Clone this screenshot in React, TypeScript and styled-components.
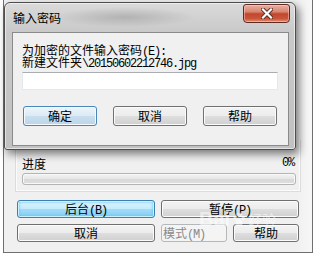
import styled, { createGlobalStyle, css } from "styled-components";

type Variant = "normal" | "focused" | "primary" | "disabled";

const GlobalStyle = createGlobalStyle`
  html, body {
    margin: 0;
    padding: 0;
    background: #ffffff;
  }
  body {
    font-family: "Noto Sans CJK SC", "Liberation Sans", sans-serif;
    font-size: 12px;
    color: #000;
  }
`;

const Latin = styled.span`
  font-family: "Liberation Mono", "DejaVu Sans Mono", monospace;
  letter-spacing: -1.2px;
`;

const Chunk = styled.span`
  display: inline-block;
  height: 12px;
  line-height: 12px;
  vertical-align: top;
`;

const buttonVariants = {
  normal: css`
    border-color: #707070;
    background: linear-gradient(#f3f3f3 0%, #ececec 50%, #dedede 50%, #d0d0d0 100%);
    box-shadow: inset 0 0 0 1px #fbfbfb;
    color: #000;
  `,
  focused: css`
    border-color: #3c7fb1;
    background: linear-gradient(#e2f5fd 0%, #c4ebfc 48%, #a2dbf7 52%, #86cff2 100%);
    box-shadow: inset 0 0 0 1px #c8f0ff, inset 0 0 3px 1px #55c2f2;
    color: #000;
  `,
  primary: css`
    border-color: #4a87b8;
    background: linear-gradient(#ecf5fb 0%, #dceaf5 50%, #c9dfee 50%, #bcd5e8 100%);
    box-shadow: inset 0 0 0 1px #f4faff;
    color: #000;
  `,
  disabled: css`
    border-color: #b4b8bb;
    background: #f4f4f4;
    box-shadow: none;
    color: #8a8a8a;
  `,
};

const WinButton = styled.div<{ $variant: Variant; $h: number; $align?: "left" | "center" }>`
  box-sizing: border-box;
  height: ${(p) => p.$h}px;
  line-height: ${(p) => p.$h - 2}px;
  border: 1px solid;
  border-radius: 3px;
  text-align: ${(p) => p.$align ?? "center"};
  padding-left: ${(p) => (p.$align === "left" ? "1px" : "0")};
  white-space: nowrap;
  overflow: hidden;
  ${(p) => buttonVariants[p.$variant]}
`;

const Screen = styled.div`
  position: relative;
  width: 316px;
  height: 255px;
  overflow: hidden;
  background: #ffffff;
`;

/* ---------- background progress window ---------- */

const BackWindow = styled.div`
  box-sizing: border-box;
  margin-left: 3px;
  width: 310px;
  height: 253px;
  border: 1px solid #6f6f6f;
  border-top: none;
  background: linear-gradient(90deg, #f0f0f0 0%, #f0f0f0 95%, #f7f7f7 100%);
  display: flex;
  flex-direction: column;
  padding-top: 140px;
`;

const ProgressPanel = styled.div`
  box-sizing: border-box;
  margin-left: 11px;
  width: 286px;
  border: 1px solid #dcdcdc;
  border-top: none;
  box-shadow: inset 1px 0 0 #fbfbfb, inset -1px -1px 0 #fbfbfb;
  padding: 17px 6px 6px 6px;
`;

const LabelRow = styled.div`
  display: flex;
  justify-content: space-between;
  line-height: 13px;
  height: 13px;
`;

const ProgressBar = styled.div`
  box-sizing: border-box;
  margin-top: 3px;
  width: 274px;
  height: 12px;
  border: 1px solid #b4b4b4;
  border-radius: 3px;
  background: linear-gradient(#f4f4f4 0%, #e6e6e6 50%, #d9d9d9 51%, #dedede 100%);
  box-shadow: inset 0 0 0 1px #f8f8f8;
`;

const ActionGrid = styled.div`
  margin-top: 8px;
  margin-left: 13px;
  display: grid;
  grid-template-columns: 138px 66px 66px;
  grid-auto-rows: 18px;
  column-gap: 6px;
  row-gap: 6px;
`;

const Span2 = styled.div`
  grid-column: span 2;
`;

/* ---------- front password dialog ---------- */

const Dialog = styled.div`
  position: absolute;
  left: 4px;
  top: 2px;
  box-sizing: border-box;
  width: 292px;
  height: 148px;
  border: 1px solid #4d4d4d;
  border-radius: 6px 6px 3px 3px;
  background:
    radial-gradient(ellipse 70px 10px at 120px 14px, rgba(120, 120, 120, 0.35), transparent),
    linear-gradient(#dadada 0%, #c9c9c9 20%, #c1c1c1 100%);
  box-shadow:
    inset 0 0 0 1px rgba(255, 255, 255, 0.55),
    3px 4px 8px rgba(0, 0, 0, 0.5);
  display: flex;
  flex-direction: column;
`;

const TitleBar = styled.div`
  height: 29px;
  display: flex;
  align-items: flex-start;
  justify-content: space-between;
`;

const TitleText = styled.div`
  align-self: center;
  margin-left: 8px;
  line-height: 13px;
  color: #000;
`;

const CloseButton = styled.div`
  box-sizing: border-box;
  margin-top: 1px;
  margin-right: 5px;
  width: 47px;
  height: 19px;
  border: 1px solid #5e2a22;
  border-radius: 3px 3px 4px 4px;
  background: linear-gradient(#e9b0a3 0%, #d98672 40%, #c3462d 52%, #c9553a 80%, #e39274 100%);
  box-shadow: inset 0 0 0 1px rgba(255, 210, 200, 0.5);
  display: flex;
  align-items: center;
  justify-content: center;
`;

const Client = styled.div`
  box-sizing: border-box;
  margin: 0 6px 3px 7px;
  flex: 1;
  border: 1px solid #8a8a8a;
  background: #f0f0f0;
  padding: 11px 0 0 9px;
`;

const Prompt = styled.div`
  height: 12px;
  line-height: 12px;
  white-space: nowrap;
`;

const PasswordInput = styled.div`
  box-sizing: border-box;
  margin-top: 4px;
  width: 256px;
  height: 18px;
  border: 1px solid #e3e9ef;
  border-top-color: #abadb3;
  background: #ffffff;
`;

const DialogButtons = styled.div`
  margin-top: 16px;
  margin-left: 1px;
  display: flex;
  gap: 16px;
  & > * {
    width: 74px;
  }
`;

const Watermark = styled.div`
  position: absolute;
  left: 199px;
  top: 209px;
  display: flex;
  align-items: center;
  gap: 2px;
  color: rgba(255, 255, 255, 0.55);
  font-family: "Liberation Sans", sans-serif;
  font-weight: bold;
  font-size: 20px;
  line-height: 20px;
  pointer-events: none;
`;

const WatermarkCjk = styled.span`
  font-family: "Noto Sans CJK SC", sans-serif;
  font-size: 14px;
  line-height: 14px;
  font-weight: normal;
`;

export default function App() {
  return (
    <>
      <GlobalStyle />
      <Screen>
        <BackWindow>
          <ProgressPanel>
            <LabelRow>
              <span>进度</span>
              <Latin>0%</Latin>
            </LabelRow>
            <ProgressBar />
          </ProgressPanel>
          <ActionGrid>
            <WinButton $variant="focused" $h={18}>
              后台<Latin>(B)</Latin>
            </WinButton>
            <Span2>
              <WinButton $variant="normal" $h={18}>
                暂停<Latin>(P)</Latin>
              </WinButton>
            </Span2>
            <WinButton $variant="normal" $h={18}>
              取消
            </WinButton>
            <WinButton $variant="disabled" $h={18} $align="left">
              模式<Latin>(M)</Latin>
            </WinButton>
            <WinButton $variant="normal" $h={18}>
              帮助
            </WinButton>
          </ActionGrid>
        </BackWindow>

        <Watermark>
          <span>Bai</span>
          <svg width="14" height="15" viewBox="0 0 14 15" fill="rgba(255,255,255,0.55)">
            <ellipse cx="3" cy="6" rx="1.6" ry="2" />
            <ellipse cx="5.6" cy="2.6" rx="1.6" ry="2" />
            <ellipse cx="8.6" cy="2.6" rx="1.6" ry="2" />
            <ellipse cx="11.2" cy="6" rx="1.6" ry="2" />
            <path d="M7 7 C4.5 7 3 10 3.5 12 C4 14 6 13.2 7 13.2 C8 13.2 10 14 10.5 12 C11 10 9.5 7 7 7 Z" />
          </svg>
          <WatermarkCjk>经验</WatermarkCjk>
        </Watermark>

        <Dialog>
          <TitleBar>
            <TitleText>输入密码</TitleText>
            <CloseButton>
              <svg width="12" height="11" viewBox="0 0 12 11">
                <path d="M2 1.5 L10 9.5 M10 1.5 L2 9.5" stroke="#5a2a22" strokeWidth="4" strokeLinecap="square" />
                <path d="M2 1.5 L10 9.5 M10 1.5 L2 9.5" stroke="#ffffff" strokeWidth="2.2" strokeLinecap="square" />
              </svg>
            </CloseButton>
          </TitleBar>
          <Client>
            <Prompt>
              <Chunk>为加密的文件输入密码</Chunk>
              <Chunk>
                <Latin>(E):</Latin>
              </Chunk>
            </Prompt>
            <Prompt>
              <Chunk>新建文件夹</Chunk>
              <Chunk>
                <Latin>\20150602212746.jpg</Latin>
              </Chunk>
            </Prompt>
            <PasswordInput />
            <DialogButtons>
              <WinButton $variant="primary" $h={20}>
                确定
              </WinButton>
              <WinButton $variant="normal" $h={20}>
                取消
              </WinButton>
              <WinButton $variant="normal" $h={20}>
                帮助
              </WinButton>
            </DialogButtons>
          </Client>
        </Dialog>
      </Screen>
    </>
  );
}
